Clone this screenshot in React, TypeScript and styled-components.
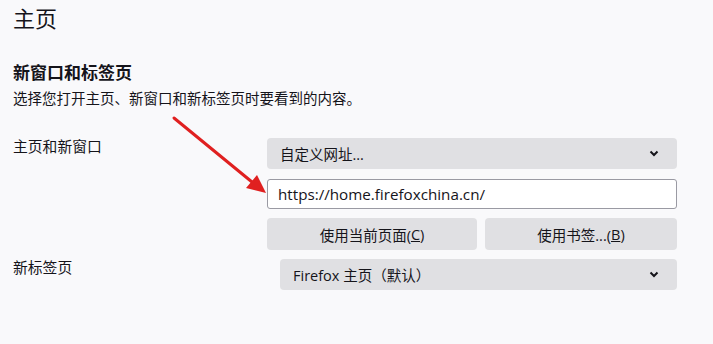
import React from 'react';
import styled, { createGlobalStyle } from 'styled-components';

const GlobalStyle = createGlobalStyle`
  html, body {
    margin: 0;
    padding: 0;
    background: #f9f9fb;
  }
  body {
    font-family: "Open Sans", "Noto Sans CJK SC", sans-serif;
    color: #15141a;
  }
`;

const Page = styled.div`
  position: relative;
  width: 713px;
  height: 344px;
  overflow: hidden;
  padding: 3px 13px 0 13px;
  box-sizing: border-box;
`;

const PageTitle = styled.h1`
  margin: 0;
  font-size: 22px;
  font-weight: 400;
  line-height: 30px;
`;

const SectionTitle = styled.h2`
  margin: 28px 0 0 0;
  font-size: 17px;
  font-weight: 700;
  line-height: 24px;
`;

const Description = styled.p`
  margin: 3px 0 0 0;
  font-size: 14.5px;
  line-height: 22px;
`;

const SettingsGrid = styled.div`
  display: grid;
  grid-template-columns: 254px 410px;
  row-gap: 9px;
  margin-top: 28px;
`;

const RowLabel = styled.div`
  font-size: 14.8px;
  line-height: 22px;
  margin-top: -3px;
`;

const Controls = styled.div`
  display: flex;
  flex-direction: column;
  gap: 10px;
`;

const Select = styled.div<{ $indent?: number }>`
  display: flex;
  align-items: center;
  justify-content: space-between;
  height: 31px;
  margin-left: ${(p) => p.$indent ?? 0}px;
  padding: 0 18px 0 13px;
  background: #e0e0e3;
  border-radius: 4px;
  font-size: 14.5px;
  box-sizing: border-box;
`;

const UrlInput = styled.div`
  display: flex;
  align-items: center;
  height: 30px;
  padding: 0 10px;
  background: #fff;
  border: 1px solid #9a9aa3;
  border-radius: 3px;
  font-size: 15.2px;
  box-sizing: border-box;
`;

const ButtonRow = styled.div`
  display: grid;
  grid-template-columns: 210px 192px;
  gap: 8px;
  margin-top: -1px;
`;

const Button = styled.div`
  display: flex;
  align-items: center;
  justify-content: center;
  height: 32px;
  background: #e0e0e3;
  border-radius: 4px;
  font-size: 14.5px;
`;

const AccessKey = styled.span`
  text-decoration: underline;
`;

const Arrow = styled.svg`
  position: absolute;
  left: 0;
  top: 0;
  pointer-events: none;
`;

const Chevron = () => (
  <svg width="10" height="7" viewBox="0 0 10 7">
    <path d="M1.5 1.5 L5 5 L8.5 1.5" fill="none" stroke="#15141a" strokeWidth="2" />
  </svg>
);

export default function App() {
  return (
    <>
      <GlobalStyle />
      <Page>
        <PageTitle>主页</PageTitle>
        <SectionTitle>新窗口和标签页</SectionTitle>
        <Description>选择您打开主页、新窗口和新标签页时要看到的内容。</Description>
        <SettingsGrid>
          <RowLabel>主页和新窗口</RowLabel>
          <Controls>
            <Select>
              <span>自定义网址...</span>
              <Chevron />
            </Select>
            <UrlInput>https://home.firefoxchina.cn/</UrlInput>
            <ButtonRow>
              <Button>
                使用当前页面(<AccessKey>C</AccessKey>)
              </Button>
              <Button>
                使用书签...(<AccessKey>B</AccessKey>)
              </Button>
            </ButtonRow>
          </Controls>
          <RowLabel>新标签页</RowLabel>
          <Select $indent={13}>
            <span>Firefox 主页（默认）</span>
            <Chevron />
          </Select>
        </SettingsGrid>
        <Arrow width="713" height="344" viewBox="0 0 713 344">
          <line x1="174" y1="118" x2="252" y2="182" stroke="#e02020" strokeWidth="3" strokeLinecap="round" />
          <polygon points="266,193 246,188 257,175" fill="#e02020" />
        </Arrow>
      </Page>
    </>
  );
}
